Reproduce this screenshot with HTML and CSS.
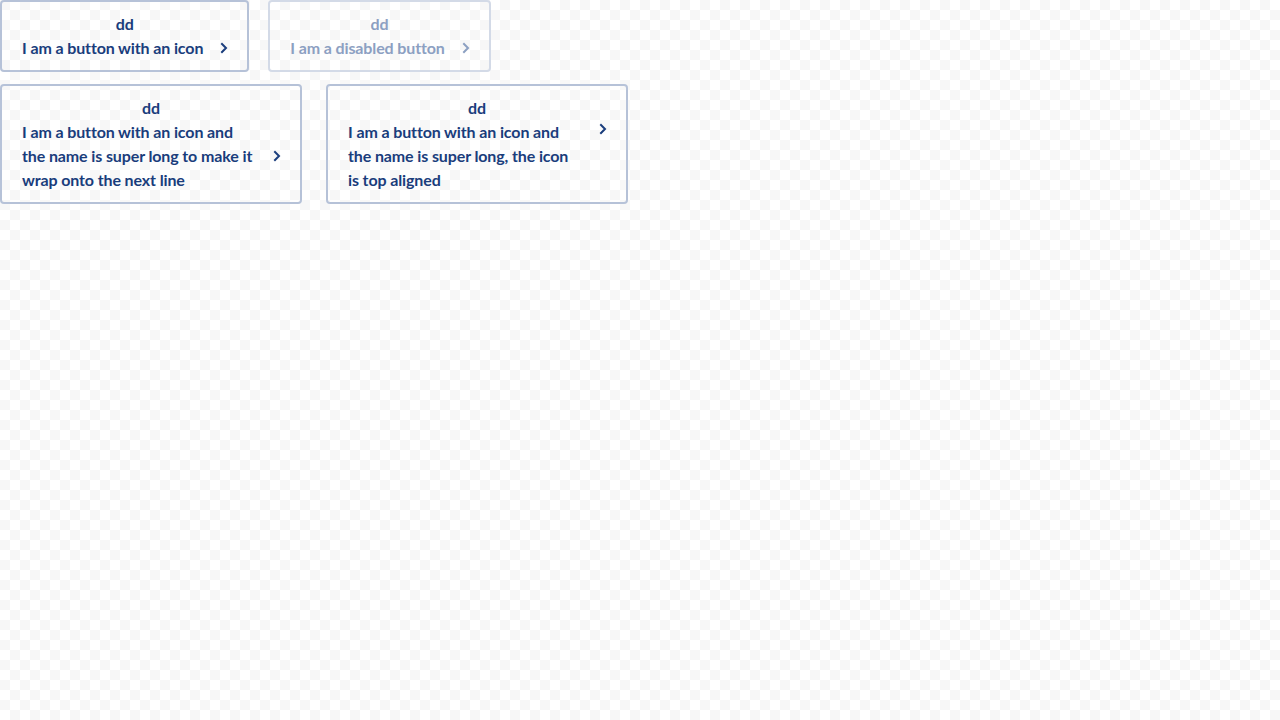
FILE: index.html
```html
<!DOCTYPE html>
<html lang="en">
<head>
<meta charset="utf-8">
<title>Buttons</title>
<link rel="stylesheet" href="styles.css">
</head>
<body>
<div class="row row-short">
  <button class="btn" type="button">
    <span class="btn-title">dd</span>
    <span class="btn-body">
      <span class="btn-text">I am a button with an icon</span>
      <svg class="btn-icon" viewBox="0 0 6 10" width="6" height="10" aria-hidden="true"><polyline points="1,1 5,5 1,9" fill="none" stroke="currentColor" stroke-width="2" stroke-linecap="square" stroke-linejoin="miter"/></svg>
    </span>
  </button>
  <button class="btn" type="button" disabled>
    <span class="btn-title">dd</span>
    <span class="btn-body">
      <span class="btn-text">I am a disabled button</span>
      <svg class="btn-icon" viewBox="0 0 6 10" width="6" height="10" aria-hidden="true"><polyline points="1,1 5,5 1,9" fill="none" stroke="currentColor" stroke-width="2" stroke-linecap="square" stroke-linejoin="miter"/></svg>
    </span>
  </button>
</div>
<div class="row row-long">
  <button class="btn btn-long" type="button">
    <span class="btn-title">dd</span>
    <span class="btn-body">
      <span class="btn-text">I am a button with an icon and the name is super long to make it wrap onto the next line</span>
      <svg class="btn-icon" viewBox="0 0 6 10" width="6" height="10" aria-hidden="true"><polyline points="1,1 5,5 1,9" fill="none" stroke="currentColor" stroke-width="2" stroke-linecap="square" stroke-linejoin="miter"/></svg>
    </span>
  </button>
  <button class="btn btn-long btn-top" type="button">
    <span class="btn-title">dd</span>
    <span class="btn-body">
      <span class="btn-text">I am a button with an icon and the name is super long, the icon is top aligned</span>
      <svg class="btn-icon" viewBox="0 0 6 10" width="6" height="10" aria-hidden="true"><polyline points="1,1 5,5 1,9" fill="none" stroke="currentColor" stroke-width="2" stroke-linecap="square" stroke-linejoin="miter"/></svg>
    </span>
  </button>
</div>
</body>
</html>
```
FILE: styles.css
```css
html, body {
  margin: 0;
  padding: 0;
}
body {
  width: 1280px;
  height: 720px;
  font-family: "Source Sans Pro", Lato, "Liberation Sans", sans-serif;
  background-color: #ffffff;
  background-image:
    conic-gradient(#ffffff 0 25%, #f7f7f7 0 50%, #ffffff 0 75%, #f7f7f7 0);
  background-size: 20px 20px;
}
.row {
  display: flex;
  align-items: flex-start;
}
.row-short {
  gap: 19px;
  margin-bottom: 12px;
}
.row-long {
  gap: 24px;
}
.btn {
  box-sizing: border-box;
  display: flex;
  flex-direction: column;
  margin: 0;
  padding: 10px 20px;
  border: 2px solid #b6c2d8;
  border-radius: 4px;
  background: transparent;
  color: #1a3d7c;
  font-family: inherit;
  font-size: 16px;
  font-weight: 700;
  line-height: 24px;
  letter-spacing: -0.12px;
  text-align: left;
  cursor: pointer;
}
.btn:disabled {
  border-color: #d3dae7;
  color: #8ca0c2;
  cursor: default;
}
.btn-title {
  display: block;
  text-align: center;
}
.btn-body {
  display: flex;
  align-items: center;
  gap: 18px;
}
.btn-text {
  flex: 1 1 auto;
}
.btn-icon {
  flex: 0 0 auto;
  overflow: visible;
}
.btn-long {
  width: 302px;
}
.btn-top .btn-body {
  align-items: flex-start;
}
.btn-top .btn-icon {
  margin-top: 4px;
}
```
